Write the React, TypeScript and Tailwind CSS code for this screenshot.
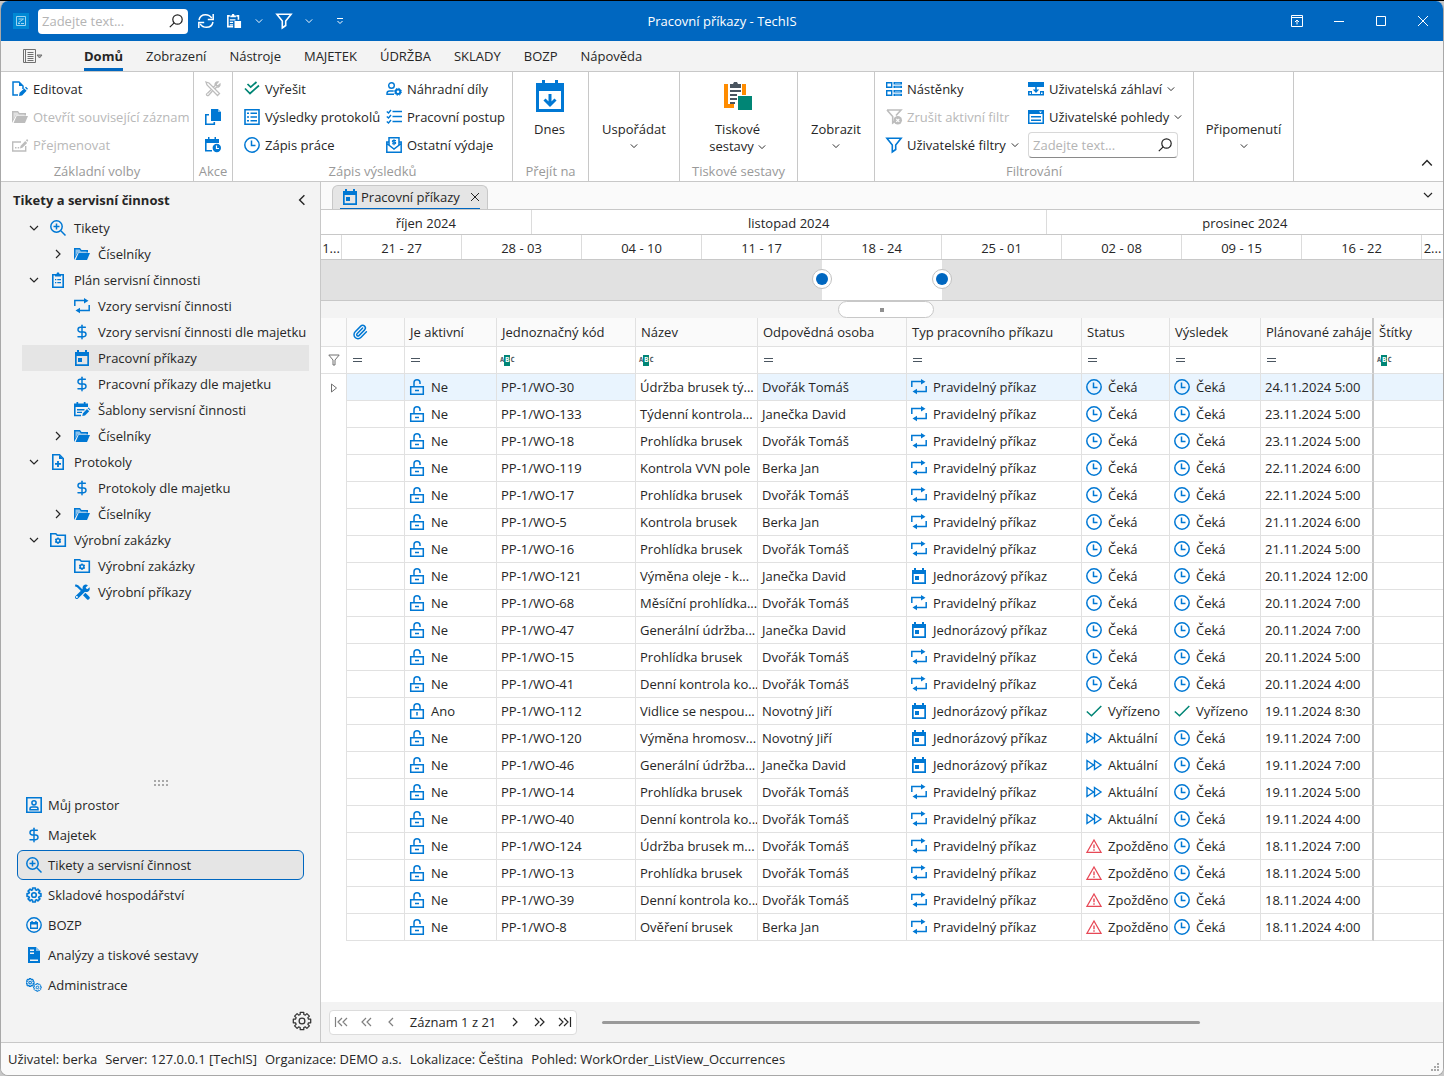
import type { ReactNode } from 'react';
import { DollarSign, Paperclip } from 'lucide-react';

const BLUE = '#0078d4';
const GREEN = '#008575';
const RED = '#e74856';

// 16x16 pictograms, drawn in currentColor
const glyphs: Record<string, ReactNode> = {
  edit: (
    <>
      <path d="M6 14H1V1h6l4 4v3" fill="none" stroke="currentColor" strokeWidth="1.5" />
      <path d="M7 1v4h4z" />
      <path d="M7 15l.6-3.2 4.6-4.4 2.4 2.4-4.5 4.6zM13 6.6l1-.9 2 2-1 1z" />
    </>
  ),
  folder: (
    <>
      <path d="M0 14V2h6l1.5 2H14v2.5H4z" />
      <path d="M1.6 14L4.6 7H16l-3 7z" />
      <path d="M1.5 10.5V3.5h4l1.4 2h5.6v1H3.4z" fill="white" opacity=".55" />
    </>
  ),
  rename: (
    <>
      <path d="M9 5H.7v9h13V9" fill="none" stroke="currentColor" strokeWidth="1.4" />
      <path d="M3 10h1.5v1.5H3zM5.7 10h1.5v1.5H5.7zM8 11.5l.5-2.6L13.2 4l2 2-4.8 4.8zM13.8 3.3l.8-.8a.8.8 0 0 1 1.1 0l.3.4a.8.8 0 0 1 0 1l-.7.8z" />
    </>
  ),
  tools: (
    <>
      <path d="M1.2 1.2l2.4.9L8.5 7" fill="none" stroke="currentColor" strokeWidth="2.2" />
      <path d="M9 11.2l2.4-2.4 4.2 4.2c1 1.200-1.200 3.500-2.500 2.500z" />
      <path d="M2.8 13.2l7.700-7.400" fill="none" stroke="currentColor" strokeWidth="3.600" strokeLinecap="round" />
      <path d="M13.900 1.400l-2.200 2 .7 1.300 1.300.4 1.800-1.900c1 2.900-1.200 5.200-3.800 4.800C8.500 7.500 7.500 3.400 9.800 1.300c1.200-1.100 2.800-1.100 4.100.1z" />
      <circle cx="2.9" cy="13.1" r="1" fill="white" />
    </>
  ),
  // pencil crossed with a wrench, outlined for the disabled ribbon button
  toolsOutline: (
    <>
      <path d="M1 1l3 1 10.500 10.500-2 2L2 4zM2.300 12.500l3.500-3.500M8.500 6l1.700-1.500C9.500 2.500 11 .8 13 1l-1.800 2 .4 1.400 1.500.4L15 3c.3 2-1.500 3.500-3.300 3L10.200 7.500M7.200 10.300l-3.500 3.900c-1.300 1-3-.5-1.900-1.700" fill="none" stroke="currentColor" strokeWidth="1.300" />
    </>
  ),
  copy: (
    <>
      <path d="M6 0h7l3 3v9H6z" />
      <path d="M4 5.700H.8v9.500h8.500V13" fill="none" stroke="currentColor" strokeWidth="1.600" />
      <path d="M13 0l3 3h-3z" fill="white" opacity=".5" />
    </>
  ),
  calendarClock: (
    <>
      <path d="M0 2h3V0h1.500v2h5V0H11v2h3v4H1.600v7H7v1.600H0z" />
      <circle cx="11.800" cy="11" r="4.200" />
      <path d="M11.500 8.500v3h2.500" fill="none" stroke="white" strokeWidth="1.200" />
    </>
  ),
  doubleCheck: (
    <path d="M3.500 3l3.200 3.200L12.500 1M1 7.500l5 5L15 4.500" fill="none" stroke="currentColor" strokeWidth="1.700" />
  ),
  form: (
    <>
      <path d="M1 .8h14v14.500H1z" fill="none" stroke="currentColor" strokeWidth="1.600" />
      <path d="M3 3.500h2V5H3zM6.500 3.500H13V5H6.500zM3 7.300h2v1.400H3zM6.500 7.300H13v1.400H6.500zM3 11h2v1.500H3zM6.500 11H13v1.500H6.500z" />
    </>
  ),
  clock: (
    <>
      <circle cx="8" cy="8" r="7.200" fill="none" stroke="currentColor" strokeWidth="1.500" />
      <path d="M7.500 3.500v5h4" fill="none" stroke="currentColor" strokeWidth="1.500" />
    </>
  ),
  checklist: (
    <path d="M.8 2.500L2.500 4 5 1M.8 7.500L2.500 9 5 6M.8 12.500L2.500 14 5 11M6.500 2.500H16M6.500 7.500H16M6.500 12.500H16" fill="none" stroke="currentColor" strokeWidth="1.400" />
  ),
  envelope: (
    <>
      <path d="M3 8V.8h10V8" fill="none" stroke="currentColor" strokeWidth="1.500" />
      <path d="M3 5H.8v10.200h14.400V5H13M.8 6.500L8 12l7.200-5.500" fill="none" stroke="currentColor" strokeWidth="1.500" />
      <path d="M10 3.500H7.200c-1.200 0-1.200 1.600 0 1.600h1.600c1.200 0 1.200 1.700 0 1.700H6M8 2.200v6" fill="none" stroke="currentColor" strokeWidth="1.100" />
    </>
  ),
  boards: (
    <>
      <path d="M.7 1.700h5v4.600h-5zM.7 9.700h5v4.600h-5z" fill="none" stroke="currentColor" strokeWidth="1.400" />
      <path d="M7.500 1H16v2.400H7.500zM7.500 4.800H16V7H7.500zM7.500 9H16v2.400H7.500zM7.500 12.800H16V15H7.500z" />
      <path d="M9 1.700h5.500v1H9zM9 5.400h5.500v1H9zM9 9.700h5.500v1H9zM9 13.400h5.500v1H9z" fill="#7fc0f0" />
    </>
  ),
  clearFilter: (
    <>
      <path d="M1 1h14l-5 5.500M1 1l5.700 6.500V14l2-1.500" fill="none" stroke="currentColor" strokeWidth="1.600" />
      <circle cx="11.800" cy="11.300" r="4.200" />
      <path d="M10.300 9.800l3 3m0-3l-3 3" stroke="white" strokeWidth="1.200" />
    </>
  ),
  filter: (
    <path d="M.9 1.200h14.200L9.700 8v4.500L6.300 15V8z" fill="none" stroke="currentColor" strokeWidth="1.600" />
  ),
  header: (
    <>
      <path d="M0 1h16v5H0zM0 10h4v4.500H0zM12 10h4v4.500h-4zM0 13h16v1.500H0zM7.200 6h1.600v4H7.200z" />
      <path d="M4.800 8.500h6.400L8 12z" />
      <path d="M1.500 11.500h1.500V13H1.500zM13 11.500h1.500V13H13z" fill="white" />
    </>
  ),
  views: (
    <>
      <path d="M0 1h16v4H0zM0 5h1.500v8.500h13V5H16v10H0zM3 7h10v1.500H3zM3 10.500h10V12H3z" />
      <path d="M11 2.500h3l-1.500 1.700z" fill="white" />
    </>
  ),
  searchPlus: (
    <path d="M10.800 10.800L15.500 15.500M6.500 3.500v6M3.500 6.500h6M12.200 6.500A5.700 5.700 0 1 1 .8 6.500a5.700 5.700 0 0 1 11.400 0z" fill="none" stroke="currentColor" strokeWidth="1.500" />
  ),
  clipboard: (
    <>
      <path d="M2.800 2.800h10.400v12.400H2.800z" fill="none" stroke="currentColor" strokeWidth="1.600" />
      <path d="M5 2h1.500L7 .5h2L9.500 2H11v2.500H5zM5 7h1.300v1.300H5zM7.300 7H11v1.300H7.300zM5 10h1.300v1.300H5zM7.300 10H11v1.300H7.300z" />
    </>
  ),
  recur: (
    <>
      <path d="M.8 8V2.500H10M15.200 7v5.500H6" fill="none" stroke="currentColor" strokeWidth="1.500" />
      <path d="M10 0l4.500 2.700L10 5.500zM6 9.700v5.600l-4.500-2.700z" />
    </>
  ),
  calendar: (
    <>
      <path d="M1 2h2V0h2v2h6V0h2v2h2v14H1zM2.700 6v8.300h10.600V6z" fillRule="evenodd" />
      <path d="M4 8h4v4H4z" />
    </>
  ),
  calendarEdit: (
    <>
      <path d="M0 1.500h2.500V0h1.700v1.500h5.600V0h1.700v1.500H14V5H1.600v7.700H7v1.500H0zM3 7h7.500v1.400H3zM3 9.700h5v1.400H3z" />
      <path d="M8.300 14l.6-2.700L13 7l2.200 2.200-4.200 4.200zM13.700 6.200l.8-.8L16.500 7.500l-.7.8z" />
    </>
  ),
  filePlus: (
    <>
      <path d="M2.800.8H9.500l3.700 3.700v10.700H2.800z" fill="none" stroke="currentColor" strokeWidth="1.600" />
      <path d="M9 1l4 4H9zM7.100 7h1.800v2H11v1.800H8.900V13H7.100v-2.200H5V9h2.100z" />
    </>
  ),
  folderGear: (
    <>
      <path d="M.8 1.800h5l1.500 1.500h8v10.900H.8z" fill="none" stroke="currentColor" strokeWidth="1.600" />
      <circle cx="8" cy="8.700" r="1.900" fill="none" stroke="currentColor" strokeWidth="1.500" />
      <path d="M8 5.500v1.200M8 10.700v1.200M5.200 7.100l1.100.6M9.700 9.700l1.100.6M5.200 10.300l1.100-.6M9.700 7.700l1.100-.6" stroke="currentColor" strokeWidth="1.400" />
    </>
  ),
  account: (
    <>
      <path d="M.8.8h14.400v14.400H.8z" fill="none" stroke="currentColor" strokeWidth="1.600" />
      <circle cx="8" cy="5.800" r="2.100" fill="none" stroke="currentColor" strokeWidth="1.500" />
      <path d="M4 12.700v-1C4 10.500 5 10 6 10h4c1 0 2 .5 2 1.700v1z" fill="none" stroke="currentColor" strokeWidth="1.500" />
    </>
  ),
  safety: (
    <>
      <circle cx="8" cy="8" r="7.200" fill="none" stroke="currentColor" strokeWidth="1.400" />
      <path d="M4 5h1.300V4h1.500v1h2.400V4h1.500v1H12v7H4zM5.300 7.500v3h5.400v-3z" fillRule="evenodd" />
    </>
  ),
  report: (
    <>
      <path d="M2 0h8l4 4v12H2zM4 2.500V4h4V2.500zM4 5.500V7h4V5.500zM4 12.500V14h8v-1.500z" fillRule="evenodd" />
      <path d="M10 0l4 4h-4z" fill="white" opacity=".5" />
    </>
  ),
  unlock: (
    <>
      <path d="M1.700 7.700h12.600v7.500H1.700z" fill="none" stroke="currentColor" strokeWidth="1.500" />
      <path d="M5 7.500V3.700a3 3 0 0 1 6 0V5M6 11.500h4" fill="none" stroke="currentColor" strokeWidth="1.500" />
    </>
  ),
  lock: (
    <>
      <path d="M1.700 6.700h12.600v8.500H1.700z" fill="none" stroke="currentColor" strokeWidth="1.500" />
      <path d="M5 6.500V3.700a3 3 0 0 1 6 0v2.800M8 9v3.500" fill="none" stroke="currentColor" strokeWidth="1.500" />
    </>
  ),
  check: <path d="M.8 8.500l4.700 4.300L15.300 3" fill="none" stroke="currentColor" strokeWidth="1.500" />,
  forward: (
    <path d="M1 3.500v9L7.500 8zM8.500 3.500v9L15 8z" fill="none" stroke="currentColor" strokeWidth="1.400" />
  ),
  warning: (
    <>
      <path d="M8 2L15 14.300H1z" fill="none" stroke="currentColor" strokeWidth="1.300" />
      <path d="M7.300 6.500h1.400v3.700H7.300zM7.300 11.300h1.400v1.400H7.300z" />
    </>
  ),
  paste: (
    <>
      <path d="M6.500 13.500H.9V2H3M10 2h2.200v4" fill="none" stroke="currentColor" strokeWidth="1.700" />
      <path d="M3.500 1.500H5L5.500 0h2L8 1.500h1.500v2h-6zM3 5.500h6v1.300H3zM3 8.300h3.500v1.300H3zM3 11h3.500v1.300H3zM8 7.500h7V15H8z" />
    </>
  ),
  refresh: (
    <>
      <path d="M1 7C1.700 3.500 4.500 1.700 7.600 1.700c2.900 0 4.800 1.300 6.200 3.500M15 9c-.7 3.500-3.500 5.300-6.600 5.300-2.900 0-4.800-1.300-6.200-3.500" fill="none" stroke="currentColor" strokeWidth="1.500" />
      <path d="M15.200 1v5.500H9.800M.8 15V9.500h5.400" fill="none" stroke="currentColor" strokeWidth="1.500" />
    </>
  ),
};

function Glyph({ name, color = BLUE, className = 'size-4' }: { name: string; color?: string; className?: string }) {
  if (name === 'dollar') return <DollarSign className={`${className} shrink-0`} color={color} strokeWidth={2.2} />;
  if (name === 'gear') return <Gear className={`${className} shrink-0`} color={color} width={1.6} />;
  if (name === 'gears') {
    return (
      <svg viewBox="0 0 32 32" className={`${className} shrink-0`} color={color}>
        <g transform="translate(-1 2) scale(1.15)"><GearShape width={1.8} /></g>
        <g transform="translate(14 12) scale(1.1)"><GearShape width={1.8} /></g>
      </svg>
    );
  }
  if (name === 'userGear') {
    return (
      <svg viewBox="0 0 16 16" className={`${className} shrink-0`} color={color}>
        <circle cx="5.500" cy="4.500" r="2.800" fill="none" stroke="currentColor" strokeWidth="1.400" />
        <path d="M8 13.300H1v-1c0-1.500 1.300-2.300 2.700-2.300h4" fill="none" stroke="currentColor" strokeWidth="1.400" />
        <circle cx="12" cy="10.800" r="2.300" fill="none" stroke="currentColor" strokeWidth="2" />
        <circle cx="12" cy="10.800" r="3.500" fill="none" stroke="currentColor" strokeWidth="1" strokeDasharray="1.400 1.350" />
      </svg>
    );
  }
  return (
    <svg viewBox="0 0 16 16" className={`${className} shrink-0 overflow-visible`} fill="currentColor" color={color} aria-hidden="true">
      {glyphs[name]}
    </svg>
  );
}

function GearShape({ width }: { width: number }) {
  const points: string[] = [];
  for (let i = 0; i < 8; i++) {
    const mid = (i * Math.PI) / 4;
    [[-0.27, 5.4], [-0.2, 7.1], [0.2, 7.1], [0.27, 5.4]].forEach(([offset, radius]) => {
      points.push(`${(8 + radius * Math.sin(mid + offset)).toFixed(2)},${(8 - radius * Math.cos(mid + offset)).toFixed(2)}`);
    });
  }
  return (
    <g fill="none" stroke="currentColor" strokeWidth={width} strokeLinejoin="round">
      <polygon points={points.join(' ')} />
      <circle cx="8" cy="8" r="2.300" />
    </g>
  );
}

function Gear({ className, color, width }: { className: string; color: string; width: number }) {
  return (
    <svg viewBox="0 0 16 16" className={className} color={color} aria-hidden="true">
      <GearShape width={width} />
    </svg>
  );
}

function Chevron({ dir = 'down', className = 'size-2' }: { dir?: 'down' | 'up' | 'left' | 'right'; className?: string }) {
  const paths = { down: 'M1 3l4 4 4-4', up: 'M1 7l4-4 4 4', left: 'M7 1L3 5l4 4', right: 'M3 1l4 4-4 4' };
  return (
    <svg viewBox="0 0 10 10" className={`${className} shrink-0`} fill="none" stroke="currentColor" strokeWidth="1.200" aria-hidden="true">
      <path d={paths[dir]} />
    </svg>
  );
}

function Magnifier() {
  return (
    <svg viewBox="0 0 14 14" className="size-3.5 shrink-0" fill="none" stroke="#222" strokeWidth="1.200" aria-hidden="true">
      <circle cx="8.500" cy="5.500" r="4.700" />
      <path d="M5.200 8.800L.8 13.200" />
    </svg>
  );
}

function SearchBox({ label, className }: { label: string; className: string }) {
  return (
    <label className={`flex items-center rounded bg-white pr-[5px] pl-1 ${className}`}>
      <input type="text" aria-label={label} placeholder="Zadejte text..." className="min-w-0 flex-1 bg-transparent outline-none placeholder:text-[#b4b4b4]" />
      <Magnifier />
    </label>
  );
}

function TitleBar() {
  return (
    <header className="relative flex h-10 shrink-0 items-center bg-[#0067c0] text-white">
      <svg viewBox="0 0 16 16" className="ml-3 size-4" fill="none" aria-hidden="true">
        <path d="M0 0h16v16H0z" fill="#0088d4" />
        <path d="M3.500 3.500h9v9h-9zM5.500 6h5M10.500 6l-5 3.500M5 10.500h2M8 10.500h3" stroke="#9fd4f2" />
      </svg>
      <SearchBox label="Hledat" className="ml-[9px] h-[25px] w-[150px] text-black" />
      <button aria-label="Obnovit" className="ml-2.5"><Glyph name="refresh" color="white" /></button>
      <button aria-label="Vložit" className="ml-[13px]"><Glyph name="paste" color="white" className="size-[15px]" /></button>
      <button aria-label="Možnosti vložení" className="ml-[13px]"><Chevron /></button>
      <button aria-label="Filtr" className="ml-[13px]"><Glyph name="filter" color="white" /></button>
      <button aria-label="Možnosti filtru" className="ml-[13px]"><Chevron /></button>
      <button aria-label="Přizpůsobit panel" className="ml-[23px]">
        <svg viewBox="0 0 8 8" className="size-2" fill="none" stroke="currentColor"><path d="M1 1.500h6M1.500 4L4 6.500 6.500 4" /></svg>
      </button>
      <h1 className="pointer-events-none absolute inset-x-0 text-center">Pracovní příkazy - TechIS</h1>
      <div className="ml-auto mr-3.5 flex items-center gap-[30px]">
        <button aria-label="Pás karet">
          <svg viewBox="0 0 12 12" className="size-3" fill="none" stroke="currentColor"><path d="M.5.5h11v11H.5zM.5 2.500h11M6 9.500V5M4 7l2-2 2 2" /></svg>
        </button>
        <button aria-label="Minimalizovat">
          <svg viewBox="0 0 12 12" className="size-3" fill="none" stroke="currentColor"><path d="M1 6.500h10" /></svg>
        </button>
        <button aria-label="Maximalizovat">
          <svg viewBox="0 0 12 12" className="size-3" fill="none" stroke="currentColor"><path d="M1.500 1.500h9v9h-9z" /></svg>
        </button>
        <button aria-label="Zavřít">
          <svg viewBox="0 0 12 12" className="size-3" fill="none" stroke="currentColor"><path d="M1 1l10 10M11 1L1 11" /></svg>
        </button>
      </div>
    </header>
  );
}

const menuTabs = ['Zobrazení', 'Nástroje', 'MAJETEK', 'ÚDRŽBA', 'SKLADY', 'BOZP', 'Nápověda'];

function MenuTabs() {
  return (
    <nav className="flex h-[31px] shrink-0 items-center gap-[23px] border-b border-[#c8c8c8] bg-[#f3f3f3] pl-[22px]">
      <button aria-label="Soubor" className="mr-[18px]">
        <svg viewBox="0 0 20 14" className="h-3.5 w-5" fill="none" stroke="#707070">
          <path d="M.5.5h12v13H.5zM2.500.5v13M4.500 3.500h6M4.500 5.500h6M4.500 7.500h6M4.500 9.500h6M4.500 11.500h6" />
          <path d="M14 6h5l-2.500 3z" fill="#aaa" />
        </svg>
      </button>
      <button className="flex h-full items-center border-b-3 border-[#0067c0] pt-[3px] font-bold">Domů</button>
      {menuTabs.map((tab) => (
        <button key={tab}>{tab}</button>
      ))}
    </nav>
  );
}

function RibbonButton({ icon, text, disabled, color, menu }: { icon: string; text: string; disabled?: boolean; color?: string; menu?: boolean }) {
  return (
    <button disabled={disabled} className="flex h-7 items-center gap-[5px] whitespace-nowrap disabled:text-[#b8b8b8]">
      <Glyph name={icon} color={disabled ? '#bdbdbd' : color} />
      {text}
      {menu && <Chevron />}
    </button>
  );
}

function RibbonGroup({ caption, className, children }: { caption?: string; className: string; children: ReactNode }) {
  return (
    <section className={`flex shrink-0 flex-col border-r border-[#c8c8c8] pt-[3px] ${className}`}>
      <div className="flex h-[86px]">{children}</div>
      {caption && <p className="text-center whitespace-nowrap text-[#999]">{caption}</p>}
    </section>
  );
}

function BigMenu({ text }: { text: string }) {
  return (
    <button className="flex w-full flex-col items-center gap-[3px] pt-11">
      {text}
      <Chevron />
    </button>
  );
}

function Ribbon() {
  return (
    <div className="flex h-[110px] shrink-0 border-b border-[#c8c8c8] bg-white">
      <RibbonGroup caption="Základní volby" className="w-[193px]">
        <div className="pl-[11px]">
          <RibbonButton icon="edit" text="Editovat" />
          <RibbonButton icon="folder" text="Otevřít související záznam" disabled />
          <RibbonButton icon="rename" text="Přejmenovat" disabled />
        </div>
      </RibbonGroup>
      <RibbonGroup caption="Akce" className="w-[39px]">
        <div className="flex w-full flex-col items-center">
          <button aria-label="Servis" disabled className="flex h-7 items-center"><Glyph name="toolsOutline" color="#bdbdbd" /></button>
          <button aria-label="Kopírovat" className="flex h-7 items-center"><Glyph name="copy" /></button>
          <button aria-label="Naplánovat" className="flex h-7 items-center"><Glyph name="calendarClock" /></button>
        </div>
      </RibbonGroup>
      <RibbonGroup caption="Zápis výsledků" className="w-[280px]">
        <div className="w-[142px] pl-[11px]">
          <RibbonButton icon="doubleCheck" text="Vyřešit" color={GREEN} />
          <RibbonButton icon="form" text="Výsledky protokolů" />
          <RibbonButton icon="clock" text="Zápis práce" />
        </div>
        <div className="pl-[11px]">
          <RibbonButton icon="userGear" text="Náhradní díly" />
          <RibbonButton icon="checklist" text="Pracovní postup" />
          <RibbonButton icon="envelope" text="Ostatní výdaje" />
        </div>
      </RibbonGroup>
      <RibbonGroup caption="Přejít na" className="w-[76px]">
        <button className="flex w-full flex-col items-center gap-[7px] pt-[5px] pr-0.5">
          <svg viewBox="0 0 28 32" className="h-8 w-7" aria-hidden="true">
            <path d="M0 3h6V0h3v3h10V0h3v3h6v29H0z" fill={BLUE} />
            <path d="M3 11h22v18H3z" fill="white" />
            <path d="M14 14v11M8.500 19.500L14 25l5.500-5.500" fill="none" stroke={BLUE} strokeWidth="3" />
          </svg>
          Dnes
        </button>
      </RibbonGroup>
      <RibbonGroup className="w-[91px]"><BigMenu text="Uspořádat" /></RibbonGroup>
      <RibbonGroup caption="Tiskové sestavy" className="w-[118px]">
        <button className="flex w-full flex-col items-center gap-2 pt-[6px] pr-0.5 leading-[17px]">
          <svg viewBox="0 0 28 32" className="h-8 w-7" aria-hidden="true">
            <path d="M0 3h4v20h6v4H0zM18 3h4v11h-4z" fill="#ff8c00" />
            <path d="M6 3h3l1-2h3l1 2h3v4H6zM6 9h11v2H6zM6 13h7v2H6zM6 17h7v2H6zM6 21h5v2H6z" fill="#4a5560" />
            <path d="M14 15h14v14H14z" fill={GREEN} />
          </svg>
          <span>
            Tiskové
            <br />
            <span className="flex items-center gap-1">sestavy <Chevron /></span>
          </span>
        </button>
      </RibbonGroup>
      <RibbonGroup className="w-[77px]"><BigMenu text="Zobrazit" /></RibbonGroup>
      <RibbonGroup caption="Filtrování" className="w-[319px]">
        <div className="w-[142px] pl-[11px]">
          <RibbonButton icon="boards" text="Nástěnky" />
          <RibbonButton icon="clearFilter" text="Zrušit aktivní filtr" disabled />
          <RibbonButton icon="filter" text="Uživatelské filtry" menu />
        </div>
        <div className="pl-[11px]">
          <RibbonButton icon="header" text="Uživatelská záhlaví" menu />
          <RibbonButton icon="views" text="Uživatelské pohledy" menu />
          <SearchBox label="Filtrovat" className="mt-px h-[26px] w-[150px] border border-[#d8d8d8] border-b-[#8a8a8a]" />
        </div>
      </RibbonGroup>
      <RibbonGroup className="w-[100px]"><BigMenu text="Připomenutí" /></RibbonGroup>
      <button aria-label="Sbalit pás karet" className="mt-auto mr-2.5 mb-3 ml-auto"><Chevron dir="up" className="size-3" /></button>
    </div>
  );
}

type TreeItem = { text: string; icon: string; level: 1 | 2; open?: boolean; leaf?: boolean; active?: boolean };

const tree: TreeItem[] = [
  { text: 'Tikety', icon: 'searchPlus', level: 1, open: true },
  { text: 'Číselníky', icon: 'folder', level: 2 },
  { text: 'Plán servisní činnosti', icon: 'clipboard', level: 1, open: true },
  { text: 'Vzory servisní činnosti', icon: 'recur', level: 2, leaf: true },
  { text: 'Vzory servisní činnosti dle majetku', icon: 'dollar', level: 2, leaf: true },
  { text: 'Pracovní příkazy', icon: 'calendar', level: 2, leaf: true, active: true },
  { text: 'Pracovní příkazy dle majetku', icon: 'dollar', level: 2, leaf: true },
  { text: 'Šablony servisní činnosti', icon: 'calendarEdit', level: 2, leaf: true },
  { text: 'Číselníky', icon: 'folder', level: 2 },
  { text: 'Protokoly', icon: 'filePlus', level: 1, open: true },
  { text: 'Protokoly dle majetku', icon: 'dollar', level: 2, leaf: true },
  { text: 'Číselníky', icon: 'folder', level: 2 },
  { text: 'Výrobní zakázky', icon: 'folderGear', level: 1, open: true },
  { text: 'Výrobní zakázky', icon: 'folderGear', level: 2, leaf: true },
  { text: 'Výrobní příkazy', icon: 'tools', level: 2, leaf: true },
];

const modules = [
  { text: 'Můj prostor', icon: 'account' },
  { text: 'Majetek', icon: 'dollar' },
  { text: 'Tikety a servisní činnost', icon: 'searchPlus', active: true },
  { text: 'Skladové hospodářství', icon: 'gear' },
  { text: 'BOZP', icon: 'safety' },
  { text: 'Analýzy a tiskové sestavy', icon: 'report' },
  { text: 'Administrace', icon: 'gears' },
];

function Sidebar() {
  return (
    <aside className="flex w-80 shrink-0 flex-col border-r border-[#c8c8c8] bg-[#f3f3f3]">
      <div className="flex h-[33px] items-center justify-between px-3 pt-[3px]">
        <h2 className="font-bold">Tikety a servisní činnost</h2>
        <button aria-label="Sbalit panel"><Chevron dir="left" className="size-3" /></button>
      </div>
      <ul className="flex-1 pr-[11px] pl-[21px]">
        {tree.map((item, i) => (
          <li key={i} className={item.active ? 'bg-[#e5e5e5]' : ''}>
            <button className={`flex h-[26px] w-full items-center whitespace-nowrap ${item.level === 1 ? 'pl-[7px]' : 'pl-[31px]'}`}>
              <span className="mr-[11px] flex w-2.5 justify-center">
                {!item.leaf && <Chevron dir={item.open ? 'down' : 'right'} className="size-2.5" />}
              </span>
              <Glyph name={item.icon} />
              <span className="ml-2">{item.text}</span>
            </button>
          </li>
        ))}
      </ul>
      <svg viewBox="0 0 14 6" className="mx-auto mb-1 h-1.5 w-3.5" fill="#a8a8a8" aria-hidden="true">
        <path d="M0 0h2v2H0zM4 0h2v2H4zM8 0h2v2H8zM12 0h2v2h-2zM0 4h2v2H0zM4 4h2v2H4zM8 4h2v2H8zM12 4h2v2h-2z" />
      </svg>
      <ul className="px-4">
        {modules.map((item) => (
          <li key={item.text}>
            <button className={`flex h-[30px] w-full items-center gap-1.5 rounded-md border px-2 ${item.active ? 'border-[#0067c0] bg-[#e5e5e5]' : 'border-transparent'}`}>
              <Glyph name={item.icon} />
              {item.text}
            </button>
          </li>
        ))}
      </ul>
      <button aria-label="Nastavení" className="mt-[11px] mr-2 mb-[11px] self-end"><Gear className="size-5" color="#333" width={1} /></button>
    </aside>
  );
}

const weeks = ['21 - 27', '28 - 03', '04 - 10', '11 - 17', '18 - 24', '25 - 01', '02 - 08', '09 - 15', '16 - 22'];

function Timeline() {
  return (
    <div className="shrink-0 bg-[#f3f3f3]">
      <div className="flex h-[25px] border-b border-[#c8c8c8] bg-white text-center leading-[26px]">
        <div className="grow-[210] basis-0 border-r border-[#dcdcdc]">říjen 2024</div>
        <div className="grow-[515] basis-0 border-r border-[#dcdcdc]">listopad 2024</div>
        <div className="grow-[397] basis-0">prosinec 2024</div>
      </div>
      <div className="flex h-[25px] border-b border-[#c8c8c8] bg-white text-center leading-[26px]">
        <div className="w-[21px] border-r border-[#dcdcdc]">1...</div>
        {weeks.map((week) => (
          <div key={week} className="flex-1 border-r border-[#dcdcdc]">{week}</div>
        ))}
        <div className="w-[21px]">2...</div>
      </div>
      <div className="flex h-[41px] border-b border-[#c8c8c8] bg-[#e1e1e1] px-[21px]">
        <div className="grow-4 basis-0" />
        <div className="relative grow basis-0 bg-white">
          <button aria-label="Začátek období" className="absolute top-[9px] -left-2.5 flex size-5 items-center justify-center rounded-full border border-[#c0c0c0] bg-white">
            <span className="size-3 rounded-full bg-[#0067c0]" />
          </button>
          <button aria-label="Konec období" className="absolute top-[9px] -right-2.5 flex size-5 items-center justify-center rounded-full border border-[#c0c0c0] bg-white">
            <span className="size-3 rounded-full bg-[#0067c0]" />
          </button>
        </div>
        <div className="grow-4 basis-0" />
      </div>
      <div className="flex h-[17px]">
        <div className="grow-[517] basis-0" />
        <button aria-label="Posunout období" className="flex w-24 items-center rounded-full border border-[#c8c8c8] bg-white pl-[41px]">
          <span className="size-1 bg-[#909090]" />
        </button>
        <div className="grow-[509] basis-0" />
      </div>
    </div>
  );
}

type Status = 'wait' | 'done' | 'current' | 'late';
// code, name, person, one-off, status, planned start
type Order = [string, string, string, boolean, Status, string];

const orders: Order[] = [
  ['30', 'Údržba brusek tý...', 'Dvořák Tomáš', false, 'wait', '24.11.2024 5:00'],
  ['133', 'Týdenní kontrola...', 'Janečka David', false, 'wait', '23.11.2024 5:00'],
  ['18', 'Prohlídka brusek', 'Dvořák Tomáš', false, 'wait', '23.11.2024 5:00'],
  ['119', 'Kontrola VVN pole', 'Berka Jan', false, 'wait', '22.11.2024 6:00'],
  ['17', 'Prohlídka brusek', 'Dvořák Tomáš', false, 'wait', '22.11.2024 5:00'],
  ['5', 'Kontrola brusek', 'Berka Jan', false, 'wait', '21.11.2024 6:00'],
  ['16', 'Prohlídka brusek', 'Dvořák Tomáš', false, 'wait', '21.11.2024 5:00'],
  ['121', 'Výměna oleje - k...', 'Janečka David', true, 'wait', '20.11.2024 12:00'],
  ['68', 'Měsíční prohlídka...', 'Dvořák Tomáš', false, 'wait', '20.11.2024 7:00'],
  ['47', 'Generální údržba...', 'Janečka David', true, 'wait', '20.11.2024 7:00'],
  ['15', 'Prohlídka brusek', 'Dvořák Tomáš', false, 'wait', '20.11.2024 5:00'],
  ['41', 'Denní kontrola ko...', 'Dvořák Tomáš', false, 'wait', '20.11.2024 4:00'],
  ['112', 'Vidlice se nespou...', 'Novotný Jiří', true, 'done', '19.11.2024 8:30'],
  ['120', 'Výměna hromosv...', 'Novotný Jiří', true, 'current', '19.11.2024 7:00'],
  ['46', 'Generální údržba...', 'Janečka David', true, 'current', '19.11.2024 7:00'],
  ['14', 'Prohlídka brusek', 'Dvořák Tomáš', false, 'current', '19.11.2024 5:00'],
  ['40', 'Denní kontrola ko...', 'Dvořák Tomáš', false, 'current', '19.11.2024 4:00'],
  ['124', 'Údržba brusek m...', 'Dvořák Tomáš', false, 'late', '18.11.2024 7:00'],
  ['13', 'Prohlídka brusek', 'Dvořák Tomáš', false, 'late', '18.11.2024 5:00'],
  ['39', 'Denní kontrola ko...', 'Dvořák Tomáš', false, 'late', '18.11.2024 4:00'],
  ['8', 'Ověření brusek', 'Berka Jan', false, 'late', '18.11.2024 4:00'],
];

const statuses: Record<Status, { icon: string; text: string; color: string }> = {
  wait: { icon: 'clock', text: 'Čeká', color: BLUE },
  done: { icon: 'check', text: 'Vyřízeno', color: GREEN },
  current: { icon: 'forward', text: 'Aktuální', color: BLUE },
  late: { icon: 'warning', text: 'Zpožděno', color: RED },
};

function StatusCell({ status }: { status: Status }) {
  const { icon, text, color } = statuses[status];
  return (
    <div className="flex items-center gap-1.5">
      <Glyph name={icon} color={color} />
      {text}
    </div>
  );
}

function EqualsMark() {
  return (
    <svg viewBox="0 0 9 4" className="ml-0.5 h-1 w-[9px]" fill="#4a5560" aria-label="Rovná se"><path d="M0 0h9v1H0zM0 3h9v1H0z" /></svg>
  );
}

function AbcMark() {
  return (
    <span className="flex items-center font-['DejaVu_Sans_Mono',monospace] text-[7px] leading-[11px] font-bold text-[#4a5560]">
      A<span className="bg-[#008575] px-px text-white">B</span>C
    </span>
  );
}

const columns = [
  { title: '', width: 'w-[58px]', text: false },
  { title: 'Je aktivní', width: 'w-[92px]', text: false },
  { title: 'Jednoznačný kód', width: 'w-[139px]', text: true },
  { title: 'Název', width: 'w-[122px]', text: true },
  { title: 'Odpovědná osoba', width: 'w-[149px]', text: false },
  { title: 'Typ pracovního příkazu', width: 'w-[175px]', text: false },
  { title: 'Status', width: 'w-[88px]', text: false },
  { title: 'Výsledek', width: 'w-[91px]', text: false },
  { title: 'Plánované zahájen', width: 'w-[113px]', text: false },
  { title: 'Štítky', width: '', text: true },
];

function edge(i: number) {
  if (i === columns.length - 1) return '';
  return i === columns.length - 2 ? 'border-r-2 border-r-[#c8c8c8]' : 'border-r';
}

function OrdersTable() {
  return (
    <div className="min-h-0 flex-1 overflow-hidden bg-white">
      <table className="w-full table-fixed border-separate border-spacing-0 text-left whitespace-nowrap">
        <thead>
          <tr className="h-[29px] bg-[#fafafa]">
            <th className="w-[26px] border-r border-b border-[#e1e1e1] p-0" aria-label="Řádek" />
            {columns.map((col, i) => (
              <th key={i} className={`overflow-hidden border-b border-[#e1e1e1] py-0 pr-0 pl-[5px] font-normal ${col.width} ${edge(i)}`}>
                {i === 0 ? <Paperclip className="size-4" color={BLUE} strokeWidth={2.2} aria-label="Přílohy" /> : col.title}
              </th>
            ))}
          </tr>
          <tr className="h-[27px]">
            <td className="border-r border-b border-[#e1e1e1] p-0">
              <svg viewBox="0 0 12 12" className="mx-auto size-3" fill="none" stroke="#707070" aria-hidden="true"><path d="M.8 1h10.400L7 6v5H5V6z" /></svg>
            </td>
            {columns.map((col, i) => (
              <td key={i} className={`border-b border-[#e1e1e1] py-0 pr-0 ${col.text ? 'pl-[3px]' : 'pl-1'} ${edge(i)}`}>
                {col.text ? <AbcMark /> : <EqualsMark />}
              </td>
            ))}
          </tr>
        </thead>
        <tbody>
          {orders.map(([code, name, person, oneOff, status, due], row) => {
            const done = status === 'done';
            const cells = [
              '',
              <div className="flex items-center gap-1.5"><Glyph name={done ? 'lock' : 'unlock'} />{done ? 'Ano' : 'Ne'}</div>,
              `PP-1/WO-${code}`,
              name,
              person,
              <div className="flex items-center gap-1.5">
                <Glyph name={oneOff ? 'calendar' : 'recur'} />
                {oneOff ? 'Jednorázový příkaz' : 'Pravidelný příkaz'}
              </div>,
              <StatusCell status={status} />,
              <StatusCell status={done ? 'done' : 'wait'} />,
              due,
              '',
            ];
            return (
              <tr key={code} className="h-[27px]">
                <td className="border-r border-[#e1e1e1] p-0">
                  {row === 0 && (
                    <svg viewBox="0 0 8 10" className="mx-auto h-2.5 w-2" fill="none" stroke="#707070" aria-hidden="true"><path d="M1.500 1v8L6.500 5z" /></svg>
                  )}
                </td>
                {cells.map((cell, i) => (
                  <td key={i} className={`overflow-hidden border-b border-[#e1e1e1] py-0 pr-0 pl-1 ${edge(i)} ${row === 0 && i !== 3 ? 'bg-[#e9f4fe]' : ''}`}>
                    {cell}
                  </td>
                ))}
              </tr>
            );
          })}
        </tbody>
      </table>
    </div>
  );
}

function PagerIcon({ d }: { d: string }) {
  return <svg viewBox="0 0 14 10" className="h-2.5 w-3.5" fill="none" stroke="currentColor" strokeWidth="1.200" aria-hidden="true"><path d={d} /></svg>;
}

function Pager() {
  return (
    <div className="flex h-10 shrink-0 items-center bg-[#f3f3f3] pl-2">
      <div className="flex h-[25px] w-[248px] items-center justify-between rounded border border-[#dcdcdc] bg-white px-1">
        <div className="flex gap-[11px] text-[#808080]">
          <button aria-label="První"><PagerIcon d="M1.500 0v10M8 1L4 5l4 4M13 1L9 5l4 4" /></button>
          <button aria-label="Předchozí stránka"><PagerIcon d="M7 1L3 5l4 4M12 1L8 5l4 4" /></button>
          <button aria-label="Předchozí"><PagerIcon d="M9 1L5 5l4 4" /></button>
        </div>
        <span>Záznam 1 z 21</span>
        <div className="flex gap-[11px]">
          <button aria-label="Další"><PagerIcon d="M5 1l4 4-4 4" /></button>
          <button aria-label="Další stránka"><PagerIcon d="M2 1l4 4-4 4M7 1l4 4-4 4" /></button>
          <button aria-label="Poslední"><PagerIcon d="M1 1l4 4-4 4M6 1l4 4-4 4M12.500 0v10" /></button>
        </div>
      </div>
      <div className="mr-[243px] ml-[25px] h-[3px] flex-1 rounded-full bg-[#999]" />
    </div>
  );
}

export default function App() {
  return (
    <div className="h-screen border-t border-black bg-[#c8c8c8] font-['Open_Sans','Noto_Sans',sans-serif] text-[13px] leading-5 text-[#262626]">
      <div className="flex h-full flex-col overflow-hidden rounded-lg border-x border-b border-[#a8a8a8] bg-[#fafafa]">
        <TitleBar />
        <MenuTabs />
        <Ribbon />
        <div className="flex min-h-0 flex-1">
          <Sidebar />
          <main className="flex min-w-0 flex-1 flex-col">
            <div className="flex h-7 shrink-0 items-end justify-between border-b border-[#c8c8c8] pl-[11px]">
              <div className="h-6 w-[156px] rounded-t-md border border-b-0 border-[#c8c8c8] bg-[#e5e5e5] px-[7px]">
                <div className="flex h-full items-center justify-between border-b border-[#0067c0] pr-px pl-0.5">
                  <button className="flex items-center gap-[3px] whitespace-nowrap">
                    <Glyph name="calendar" />
                    Pracovní příkazy
                  </button>
                  <button aria-label="Zavřít kartu">
                    <svg viewBox="0 0 8 8" className="size-2" stroke="currentColor"><path d="M0 0l8 8M8 0L0 8" /></svg>
                  </button>
                </div>
              </div>
              <button aria-label="Seznam karet" className="mr-2.5 mb-[9px]"><Chevron className="size-2.5" /></button>
            </div>
            <Timeline />
            <OrdersTable />
            <Pager />
          </main>
        </div>
        <footer className="flex h-[33px] shrink-0 items-center gap-2 border-t border-[#c8c8c8] bg-[#fafafa] pl-[7px] whitespace-nowrap">
          <span>Uživatel: berka</span>
          <span>Server: 127.0.0.1 [TechIS]</span>
          <span>Organizace: DEMO a.s.</span>
          <span>Lokalizace: Čeština</span>
          <span>Pohled: WorkOrder_ListView_Occurrences</span>
          <svg viewBox="0 0 8 8" className="mt-auto mr-1 mb-1 ml-auto size-2" fill="#a8a8a8" aria-hidden="true"><path d="M6 0h2v2H6zM3 3h2v2H3zM6 3h2v2H6zM0 6h2v2H0zM3 6h2v2H3zM6 6h2v2H6z" /></svg>
        </footer>
      </div>
    </div>
  );
}
